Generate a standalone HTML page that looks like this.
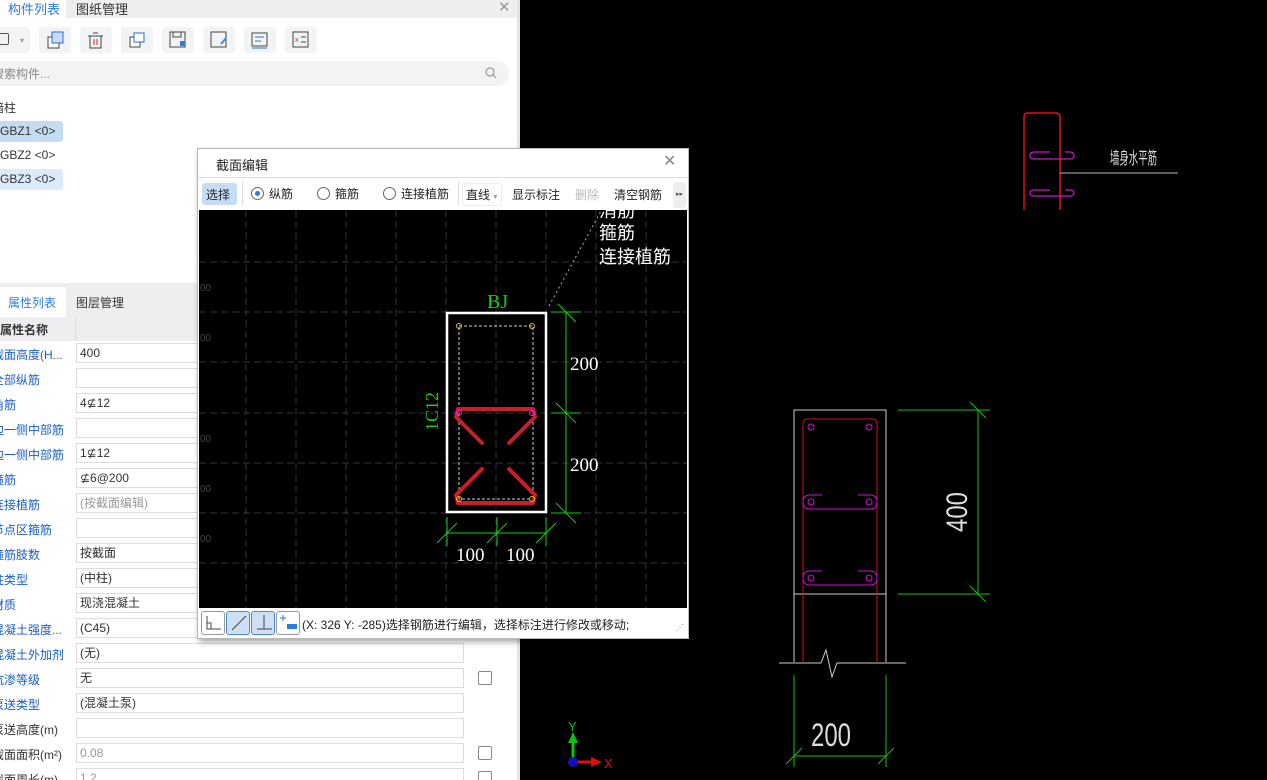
<!DOCTYPE html>
<html><head><meta charset="utf-8">
<style>
*{margin:0;padding:0;box-sizing:border-box}
body{width:1267px;height:780px;overflow:hidden;background:#000;font-family:"Liberation Sans","Noto Sans CJK SC",sans-serif;font-size:12px;color:#333;position:relative}
.abs{position:absolute}
#left{left:0;top:0;width:520px;height:780px;background:#fff;border-right:3px solid #e4e4e6;overflow:hidden}
.tabbar{left:0;width:518px;background:#eeeef0}
.btn{width:32px;height:26px;background:#f2f3f5;border-radius:3px;top:27px}
.lbl{left:-8px;color:#1a5fc8;font-size:12px;white-space:nowrap}
.val{left:76px;height:20px;border:1px solid #ddd;background:#fff;padding-left:3px;line-height:18px;font-size:12px;color:#333}
.cb{left:478px;width:14px;height:14px;border:1px solid #888;border-radius:2px;background:#fff}
#dlg{left:197px;top:148px;width:492px;height:491px;background:#fff;border:1px solid #b8b8b8;box-shadow:2px 3px 6px rgba(0,0,0,.35)}
.tb{top:32px;font-size:12px;color:#222;white-space:nowrap}
.radio{display:inline-block;width:13px;height:13px;border:1px solid #666;border-radius:50%;vertical-align:-2px;margin-right:5px;background:#fff;position:relative}
</style></head><body>

<div id="left" class="abs">
  <div class="abs tabbar" style="top:0;height:18px"></div>
  <div class="abs" style="left:0;top:0;width:66px;height:18px;background:#fff"></div>
  <div class="abs" style="left:8px;top:-1px;color:#2b7de0;font-size:13px">构件列表</div>
  <div class="abs" style="left:76px;top:-1px;color:#333;font-size:13px">图纸管理</div>
  <div class="abs" style="left:498px;top:-2px;color:#999;font-size:15px">✕</div>

  <div class="abs btn" style="left:-4px;width:34px"></div>
  <div class="abs" style="left:0;top:33px;width:9px;height:12px;border:1.5px solid #555;border-left:none;border-radius:0 2px 2px 0"></div>
  <div class="abs" style="left:20px;top:36px;color:#999;font-size:8px">▾</div>
  <div class="abs btn" style="left:39px"></div>
  <div class="abs btn" style="left:80px"></div>
  <div class="abs btn" style="left:121px"></div>
  <div class="abs btn" style="left:162px"></div>
  <div class="abs btn" style="left:203px"></div>
  <div class="abs btn" style="left:244px"></div>
  <div class="abs btn" style="left:285px"></div>
  <svg class="abs" style="left:0;top:27px" width="320" height="26">
    <rect x="48" y="10" width="11" height="11" fill="#fff" stroke="#444"/><rect x="52" y="5" width="11" height="11" fill="#c7dbf5" stroke="#2b6fd0"/>
    <rect x="90" y="9" width="11" height="12" fill="none" stroke="#444"/><line x1="88" y1="9" x2="103" y2="9" stroke="#444"/><line x1="93" y1="6" x2="98" y2="6" stroke="#444"/><line x1="94" y1="12" x2="94" y2="18" stroke="#e02020"/><line x1="97" y1="12" x2="97" y2="18" stroke="#e02020"/>
    <rect x="130" y="10" width="10" height="10" fill="#fff" stroke="#444"/><rect x="134" y="6" width="10" height="9" fill="#fff" stroke="#2b6fd0"/>
    <rect x="170" y="5" width="15" height="15" fill="none" stroke="#444"/><rect x="173" y="5" width="8" height="5" fill="none" stroke="#444"/><rect x="180" y="14" width="5" height="5" fill="#2b7de0"/>
    <rect x="211" y="5" width="15" height="15" fill="none" stroke="#444"/><line x1="221" y1="17" x2="226" y2="11" stroke="#4a8ad0" stroke-width="2"/>
    <rect x="252" y="6" width="15" height="13" fill="none" stroke="#444"/><line x1="255" y1="10" x2="264" y2="10" stroke="#2b6fd0"/><line x1="255" y1="14" x2="261" y2="14" stroke="#2b6fd0"/><line x1="252" y1="21" x2="267" y2="21" stroke="#2b6fd0"/>
    <rect x="293" y="5" width="15" height="15" fill="none" stroke="#444"/><text x="295" y="15" font-size="7" fill="#e02020">x</text><line x1="301" y1="10" x2="306" y2="10" stroke="#444"/><line x1="301" y1="15" x2="306" y2="15" stroke="#444"/>
  </svg>

  <div class="abs" style="left:-20px;top:61px;width:529px;height:25px;background:#f3f3f4;border-radius:13px"></div>
  <div class="abs" style="left:-8px;top:65px;color:#888;font-size:12px">搜索构件...</div>
  <svg class="abs" style="left:485px;top:67px" width="12" height="12"><circle cx="5" cy="5" r="4" fill="none" stroke="#999" stroke-width="1.2"/><line x1="8" y1="8" x2="11" y2="11" stroke="#999" stroke-width="1.2"/></svg>

  <div class="abs" style="left:-8px;top:99px;font-size:12px">暗柱</div>
  <div class="abs" style="left:0;top:121px;width:63px;height:21px;background:#c5dbf2;border-radius:0 3px 3px 0"></div>
  <div class="abs" style="left:0;top:124px">GBZ1 &lt;0&gt;</div>
  <div class="abs" style="left:0;top:148px">GBZ2 &lt;0&gt;</div>
  <div class="abs" style="left:0;top:169px;width:63px;height:21px;background:#dceaf9;border-radius:0 3px 3px 0"></div>
  <div class="abs" style="left:0;top:172px">GBZ3 &lt;0&gt;</div>

  <div class="abs" style="left:0;top:283px;width:518px;height:4px;background:#eee"></div>
  <div class="abs tabbar" style="top:287px;height:30px"></div>
  <div class="abs" style="left:0;top:287px;width:66px;height:30px;background:#fff"></div>
  <div class="abs" style="left:8px;top:294px;color:#2b7de0;font-size:12px">属性列表</div>
  <div class="abs" style="left:76px;top:294px;font-size:12px">图层管理</div>
  <div class="abs" style="left:0;top:317px;width:518px;height:24px;background:#eeeef0"></div>
  <div class="abs" style="left:75px;top:317px;width:1px;height:24px;background:#ddd"></div>
  <div class="abs" style="left:0;top:321px;font-weight:bold;color:#333">属性名称</div>

  <div class="abs lbl" style="top:346px">截面高度(H...</div><div class="abs val" style="top:343px;width:388px">400</div>
  <div class="abs lbl" style="top:371px">全部纵筋</div><div class="abs val" style="top:368px;width:388px"></div>
  <div class="abs lbl" style="top:396px">角筋</div><div class="abs val" style="top:393px;width:388px">4⊈12</div>
  <div class="abs lbl" style="top:421px">边一侧中部筋</div><div class="abs val" style="top:418px;width:388px"></div>
  <div class="abs lbl" style="top:446px">边一侧中部筋</div><div class="abs val" style="top:443px;width:388px">1⊈12</div>
  <div class="abs lbl" style="top:471px">箍筋</div><div class="abs val" style="top:468px;width:388px">⊈6@200</div>
  <div class="abs lbl" style="top:496px">连接植筋</div><div class="abs val" style="top:493px;width:388px;color:#999">(按截面编辑)</div>
  <div class="abs lbl" style="top:521px">节点区箍筋</div><div class="abs val" style="top:518px;width:388px"></div>
  <div class="abs lbl" style="top:546px">箍筋肢数</div><div class="abs val" style="top:543px;width:388px">按截面</div>
  <div class="abs lbl" style="top:571px">柱类型</div><div class="abs val" style="top:568px;width:388px">(中柱)</div>
  <div class="abs lbl" style="top:596px">材质</div><div class="abs val" style="top:593px;width:388px">现浇混凝土</div>
  <div class="abs lbl" style="top:621px">混凝土强度...</div><div class="abs val" style="top:618px;width:388px">(C45)</div>
  <div class="abs lbl" style="top:646px">混凝土外加剂</div><div class="abs val" style="top:643px;width:388px">(无)</div>
  <div class="abs lbl" style="top:671px">抗渗等级</div><div class="abs val" style="top:668px;width:388px">无</div><div class="abs cb" style="top:671px"></div>
  <div class="abs lbl" style="top:696px">泵送类型</div><div class="abs val" style="top:693px;width:388px">(混凝土泵)</div>
  <div class="abs lbl" style="top:721px;color:#333">泵送高度(m)</div><div class="abs val" style="top:718px;width:388px"></div>
  <div class="abs lbl" style="top:746px;color:#333">截面面积(m²)</div><div class="abs val" style="top:743px;width:388px;color:#999">0.08</div><div class="abs cb" style="top:746px"></div>
  <div class="abs lbl" style="top:771px;color:#333">截面周长(m)</div><div class="abs val" style="top:768px;width:388px;color:#999">1.2</div><div class="abs cb" style="top:771px"></div>
</div>

<!-- right CAD -->
<svg class="abs" style="left:522px;top:0" width="745" height="780">
  <g transform="translate(-522,0)">
    <path d="M1024,210 V117 Q1024,113 1028,113 H1056 Q1060,113 1060,117 V210" fill="none" stroke="#e01010" stroke-width="1.5"/>
    <path d="M1050,152 H1034 Q1030,152 1030,156 Q1030,159 1034,159 H1070 Q1074,159 1074,156 Q1074,152 1070,152 H1065" fill="none" stroke="#d010d0" stroke-width="1.2"/>
    <path d="M1050,190 H1034 Q1030,190 1030,193 Q1030,196 1034,196 H1070 Q1074,196 1074,193 Q1074,190 1070,190 H1065" fill="none" stroke="#d010d0" stroke-width="1.2"/>
    <line x1="1060" y1="173" x2="1178" y2="173" stroke="#bbb" stroke-width="1"/>
    <text x="1110" y="164" fill="#ddd" font-size="17" font-family="Noto Sans CJK SC" textLength="47" lengthAdjust="spacingAndGlyphs">墙身水平筋</text>

    <path d="M794,662 V410 H886 V662" fill="none" stroke="#ccc" stroke-width="1"/>
    <line x1="794" y1="594" x2="886" y2="594" stroke="#ccc"/>
    <path d="M803,662 V424 Q803,419 808,419 H872 Q877,419 877,424 V662" fill="none" stroke="#d01010" stroke-width="1"/>
    <g fill="none" stroke="#d010d0" stroke-width="1">
      <circle cx="811" cy="427" r="3"/><circle cx="869" cy="427" r="3"/>
      <circle cx="811" cy="502" r="3"/><circle cx="869" cy="502" r="3"/>
      <circle cx="811" cy="578" r="3"/><circle cx="869" cy="578" r="3"/>
      <path d="M822,495 H810 Q803,495 803,502 Q803,509 810,509 H870 Q877,509 877,502 Q877,495 870,495 H858"/>
      <path d="M822,571 H810 Q803,571 803,578 Q803,585 810,585 H870 Q877,585 877,578 Q877,571 870,571 H858"/>
    </g>
    <path d="M779,663 H821 L826,650 L832,677 L837,663 H906" fill="none" stroke="#ccc" stroke-width="1"/>
    <g stroke="#10c010" stroke-width="1" fill="none">
      <line x1="898" y1="410" x2="990" y2="410"/><line x1="898" y1="594" x2="990" y2="594"/>
      <line x1="978" y1="410" x2="978" y2="594"/>
      <line x1="970" y1="402" x2="986" y2="418"/><line x1="970" y1="586" x2="986" y2="602"/>
      <line x1="794" y1="675" x2="794" y2="767"/><line x1="886" y1="675" x2="886" y2="767"/>
      <line x1="794" y1="756" x2="886" y2="756"/>
      <line x1="786" y1="764" x2="802" y2="748"/><line x1="878" y1="764" x2="894" y2="748"/>
    </g>
    <text transform="translate(967,532) rotate(-90)" fill="#ddd" font-size="30" textLength="40" lengthAdjust="spacingAndGlyphs">400</text>
    <text x="811" y="746" fill="#ddd" font-size="32" textLength="40" lengthAdjust="spacingAndGlyphs">200</text>

    <line x1="573" y1="761" x2="573" y2="740" stroke="#10c010" stroke-width="3"/>
    <polygon points="573,732 568,743 578,743" fill="#10c010"/>
    <line x1="573" y1="762" x2="594" y2="762" stroke="#e01010" stroke-width="3"/>
    <polygon points="602,762 591,757 591,767" fill="#e01010"/>
    <circle cx="573" cy="762" r="5" fill="#1010c0"/>
    <text x="568" y="731" fill="#10c010" font-size="13">Y</text>
    <text x="604" y="768" fill="#e01010" font-size="13">X</text>
  </g>
</svg>

<!-- dialog -->
<div id="dlg" class="abs">
  <div class="abs" style="left:18px;top:6px;font-size:13px;color:#222">截面编辑</div>
  <div class="abs" style="left:465px;top:2px;font-size:16px;color:#888">✕</div>
  <div class="abs" style="left:0;top:28px;width:490px;height:1px;background:#ddd"></div>
  <div class="abs" style="left:4px;top:34px;width:35px;height:22px;background:#c6dcf4;border-radius:3px"></div>
  <div class="abs tb" style="left:8px;top:37px">选择</div>
  <div class="abs" style="left:44px;top:33px;width:1px;height:24px;background:#ddd"></div>
  <div class="abs tb" style="left:53px;top:36px"><span class="radio"><span style="position:absolute;left:3px;top:3px;width:5px;height:5px;border-radius:50%;background:#2b7de0"></span></span>纵筋</div>
  <div class="abs tb" style="left:119px;top:36px"><span class="radio"></span>箍筋</div>
  <div class="abs tb" style="left:185px;top:36px"><span class="radio"></span>连接植筋</div>
  <div class="abs" style="left:260px;top:33px;width:1px;height:24px;background:#ddd"></div>
  <div class="abs" style="left:264px;top:34px;width:40px;height:23px;border:1px solid #eee;border-radius:3px"></div>
  <div class="abs tb" style="left:268px;top:37px">直线 <span style="color:#999;font-size:8px">▾</span></div>
  <div class="abs tb" style="left:314px;top:37px">显示标注</div>
  <div class="abs tb" style="left:377px;top:37px;color:#bbb">删除</div>
  <div class="abs tb" style="left:416px;top:37px">清空钢筋</div>
  <div class="abs" style="left:475px;top:33px;width:13px;height:26px;background:#eee;border-radius:3px;font-size:7px;color:#555;line-height:26px;text-align:center">▸▸</div>

  <svg class="abs" style="left:1px;top:61px" width="488" height="398">
    <rect width="488" height="398" fill="#000"/>
    <g transform="translate(-198,-209)">
      <g stroke="#2f3440" stroke-width="1" stroke-dasharray="7,4">
        <line x1="245" y1="209" x2="245" y2="607"/><line x1="295" y1="209" x2="295" y2="607"/><line x1="345" y1="209" x2="345" y2="607"/><line x1="395" y1="209" x2="395" y2="607"/><line x1="445" y1="209" x2="445" y2="607"/><line x1="495" y1="209" x2="495" y2="607"/><line x1="545" y1="209" x2="545" y2="607"/><line x1="595" y1="209" x2="595" y2="607"/><line x1="645" y1="209" x2="645" y2="607"/>
        <line x1="198" y1="261" x2="688" y2="261"/><line x1="198" y1="311" x2="688" y2="311"/><line x1="198" y1="361" x2="688" y2="361"/><line x1="198" y1="412" x2="688" y2="412"/><line x1="198" y1="462" x2="688" y2="462"/><line x1="198" y1="512" x2="688" y2="512"/><line x1="198" y1="562" x2="688" y2="562"/>
      </g>
      <g fill="#444" font-size="10"><text x="199" y="290">00</text><text x="199" y="340">00</text><text x="199" y="441">00</text><text x="199" y="491">00</text><text x="199" y="541">00</text></g>
      <line x1="548" y1="305" x2="600" y2="210" stroke="#aaa" stroke-dasharray="2,3"/>
      <text x="598" y="216" fill="#fff" font-size="18" font-family="Noto Sans CJK SC">消筋</text>
      <text x="598" y="238" fill="#fff" font-size="18" font-family="Noto Sans CJK SC">箍筋</text>
      <text x="598" y="262" fill="#fff" font-size="18" font-family="Noto Sans CJK SC">连接植筋</text>
      <rect x="446" y="312" width="99" height="199" fill="none" stroke="#fff" stroke-width="2.5"/>
      <rect x="458" y="325" width="74" height="173" fill="none" stroke="#ccd" stroke-width="1" stroke-dasharray="3,2"/>
      <g stroke="#c81e28" stroke-width="4" fill="none" stroke-linecap="round" stroke-linejoin="round">
        <path d="M481,442 L455,416 L457,408 H532 L534,416 L508,442"/>
        <path d="M481,468 L455,494 L457,502 H532 L534,494 L508,468"/>
      </g>
      <g fill="none" stroke="#e0c020" stroke-width="1"><circle cx="458" cy="325" r="2.5"/><circle cx="531" cy="325" r="2.5"/><circle cx="458" cy="498" r="2.5"/><circle cx="531" cy="498" r="2.5"/></g>
      <g fill="none" stroke="#f020f0" stroke-width="1"><circle cx="458" cy="412" r="2.5"/><circle cx="531" cy="412" r="2.5"/></g>
      <text x="486" y="307" fill="#10d010" font-size="20" font-family="Liberation Serif">BJ</text>
      <text transform="translate(437,430) rotate(-90)" fill="#10d010" font-size="18" font-family="Liberation Serif">1C12</text>
      <g stroke="#10d010" stroke-width="1">
        <line x1="550" y1="311" x2="580" y2="311"/><line x1="550" y1="412" x2="580" y2="412"/><line x1="550" y1="512" x2="580" y2="512"/>
        <line x1="565" y1="311" x2="565" y2="512"/>
        <line x1="557" y1="303" x2="575" y2="321"/><line x1="555" y1="402" x2="575" y2="422"/><line x1="555" y1="502" x2="575" y2="522"/>
        <line x1="446" y1="516" x2="446" y2="545"/><line x1="496" y1="516" x2="496" y2="545"/><line x1="545" y1="516" x2="545" y2="545"/>
        <line x1="446" y1="532" x2="545" y2="532"/>
        <line x1="436" y1="542" x2="456" y2="522"/><line x1="486" y1="542" x2="506" y2="522"/><line x1="535" y1="542" x2="555" y2="522"/>
      </g>
      <text x="569" y="369" fill="#fff" font-size="19" font-family="Liberation Serif">200</text>
      <text x="569" y="470" fill="#fff" font-size="19" font-family="Liberation Serif">200</text>
      <text x="455" y="560" fill="#fff" font-size="19" font-family="Liberation Serif">100</text>
      <text x="505" y="560" fill="#fff" font-size="19" font-family="Liberation Serif">100</text>
    </g>
  </svg>

  <div class="abs" style="left:3px;top:462px;width:24px;height:24px;border:1px solid #999;border-radius:3px;background:#fff"></div>
  <div class="abs" style="left:28px;top:462px;width:24px;height:24px;border:1px solid #4a8ad0;border-radius:3px;background:#cfe0f6"></div>
  <div class="abs" style="left:53px;top:462px;width:24px;height:24px;border:1px solid #4a8ad0;border-radius:3px;background:#cfe0f6"></div>
  <div class="abs" style="left:78px;top:462px;width:24px;height:24px;border:1px solid #999;border-radius:3px;background:#fff"></div>
  <svg class="abs" style="left:3px;top:462px" width="100" height="24">
    <path d="M6,5 V18 H20 M6,12 H10 V18" fill="none" stroke="#444"/>
    <line x1="31" y1="19" x2="45" y2="5" stroke="#444"/>
    <path d="M63,4 V18 M56,18 H71" fill="none" stroke="#444"/>
    <path d="M79,7 H85 M82,4 V10" stroke="#2b7de0"/><rect x="86" y="13" width="10" height="5" fill="#2b7de0"/>
  </svg>
  <div class="abs" style="left:104px;top:467px;font-size:12px;color:#222;white-space:nowrap">(X: 326 Y: -285)选择钢筋进行编辑，选择标注进行修改或移动;</div>
  <div class="abs" style="left:478px;top:474px;font-size:8px;color:#888">⋰</div>
</div>
</body></html>
